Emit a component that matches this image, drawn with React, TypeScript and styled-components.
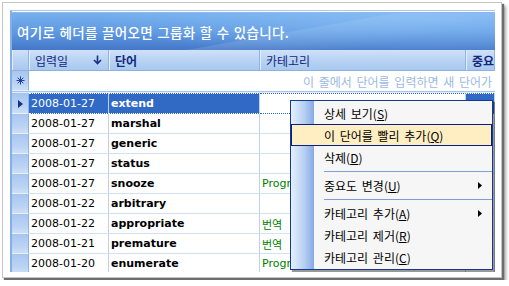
import React from 'react'
import styled, { createGlobalStyle } from 'styled-components'

const GlobalStyle = createGlobalStyle`
  html, body {
    margin: 0;
    padding: 0;
    background: #fff;
  }
  body {
    padding: 2px;
    font-family: "DejaVu Sans", "Noto Sans CJK KR", sans-serif;
  }
`

const COLS = '17px 80px 151px 206px 1fr'

type Row = { date: string; word: string; cat: string }

const rows: Row[] = [
  { date: '2008-01-27', word: 'extend', cat: '' },
  { date: '2008-01-27', word: 'marshal', cat: '' },
  { date: '2008-01-27', word: 'generic', cat: '' },
  { date: '2008-01-27', word: 'status', cat: '' },
  { date: '2008-01-27', word: 'snooze', cat: 'Programming' },
  { date: '2008-01-22', word: 'arbitrary', cat: '' },
  { date: '2008-01-22', word: 'appropriate', cat: '번역' },
  { date: '2008-01-21', word: 'premature', cat: '번역' },
  { date: '2008-01-20', word: 'enumerate', cat: 'Programming' },
]

type MenuEntry =
  | { sep: true }
  | { label: string; key: string; hot?: boolean; sub?: boolean }

const menu: MenuEntry[] = [
  { label: '상세 보기', key: 'S' },
  { label: '이 단어를 빨리 추가', key: 'Q', hot: true },
  { label: '삭제', key: 'D' },
  { sep: true },
  { label: '중요도 변경', key: 'U', sub: true },
  { sep: true },
  { label: '카테고리 추가', key: 'A', sub: true },
  { label: '카테고리 제거', key: 'R' },
  { label: '카테고리 관리', key: 'C' },
]

const App: React.FC = () => {
  return (
    <>
      <GlobalStyle />
      <Frame>
        <Grid>
          <GroupPanel>
            <GroupText>여기로 헤더를 끌어오면 그룹화 할 수 있습니다.</GroupText>
          </GroupPanel>
          <HeaderRow>
            <HeadCell />
            <HeadCell>
              <span>입력일</span>
              <svg width="9" height="10" viewBox="0 0 9 10">
                <path d="M4.5 0.5v8M1 5l3.5 3.5L8 5" fill="none" stroke="#1b2f84" strokeWidth="1.6" />
              </svg>
            </HeadCell>
            <HeadCell $bold>단어</HeadCell>
            <HeadCell>카테고리</HeadCell>
            <HeadCell $bold>중요도</HeadCell>
          </HeaderRow>
          <NewRow>
            <Selector>
              <svg width="9" height="9" viewBox="0 0 9 9">
                <path d="M4.5 0.5v8M0.5 4.5h8M1.7 1.7l5.6 5.6M7.3 1.7l-5.6 5.6" stroke="#23409a" strokeWidth="1" />
              </svg>
            </Selector>
            <NewRowHint>이 줄에서 단어를 입력하면 새 단어가 추가됩니다.</NewRowHint>
          </NewRow>
          <NewRowSeparator />
          {rows.map((r, i) => {
            const sel = i === 0
            return (
              <DataRow key={r.word}>
                <Selector>
                  {sel && (
                    <svg width="5" height="8" viewBox="0 0 5 8">
                      <path d="M0 0l5 4-5 4z" fill="#1b2f84" />
                    </svg>
                  )}
                </Selector>
                <Cell $selected={sel}>{r.date}</Cell>
                <Cell $selected={sel} $bold>{r.word}</Cell>
                <Cell $focusWhite={sel} $green>{r.cat}</Cell>
                <Cell $selected={sel} />
              </DataRow>
            )
          })}
          <Menu>
            {menu.map((m, i) =>
              'sep' in m ? (
                <MenuSep key={i} />
              ) : (
                <MenuItem key={i} $hot={m.hot}>
                  <span>
                    {m.label}(<u>{m.key}</u>)
                  </span>
                  {m.sub && (
                    <svg width="4" height="7" viewBox="0 0 4 7">
                      <path d="M0 0l4 3.5L0 7z" fill="#000" />
                    </svg>
                  )}
                </MenuItem>
              )
            )}
          </Menu>
        </Grid>
      </Frame>
    </>
  )
}

const Frame = styled.div`
  width: 488px;
  height: 265px;
  padding: 7px 3px 2px 7px;
  background: #fff;
  border: 1px solid #c4c4c4;
  box-shadow: 2px 2px 1px #6d6d6d, 4px 4px 3px rgba(0, 0, 0, 0.35);
`

const Grid = styled.div`
  position: relative;
  width: 485px;
  height: 262px;
  overflow: hidden;
  background: #fff;
  border-top: 1px solid #a9c8ef;
  border-left: 2px solid #86ade6;
  box-sizing: border-box;
  padding-top: 1px;
`

const GroupPanel = styled.div`
  height: 37px;
  border-top: 1px solid #8fb5ea;
  display: flex;
  align-items: center;
  padding-left: 5px;
  background:
    radial-gradient(ellipse 330px 40px at 420px 6px, rgba(150, 200, 250, 0.55), rgba(150, 200, 250, 0) 100%),
    linear-gradient(170deg, rgba(255, 255, 255, 0) 55%, rgba(255, 255, 255, 0.12) 56%, rgba(255, 255, 255, 0) 80%),
    linear-gradient(to bottom, #76b0ee 0%, #5f9ae2 50%, #4478c8 100%);
`

const GroupText = styled.span`
  color: #fff;
  font-family: "Noto Sans CJK KR", sans-serif;
  font-size: 13.5px;
  font-weight: 500;
  word-spacing: 1px;
  letter-spacing: 0.3px;
`

const HeaderRow = styled.div`
  display: grid;
  grid-template-columns: ${COLS};
  height: 20px;
  border-bottom: 1px solid #8eb1e4;
`

const HeadCell = styled.div<{ $bold?: boolean }>`
  display: flex;
  align-items: center;
  justify-content: space-between;
  padding: 0 6px;
  overflow: hidden;
  white-space: nowrap;
  background: linear-gradient(to bottom, #cfe1f8 0%, #b9d3f4 50%, #a9c8ef 100%);
  border-right: 1px solid #8fb3e6;
  box-shadow: inset 1px 0 0 #e4eefb;
  color: #13287d;
  font-family: "Noto Sans CJK KR", sans-serif;
  font-size: 12px;
  font-weight: ${(p) => (p.$bold ? 700 : 400)};
`

const NewRow = styled.div`
  display: grid;
  grid-template-columns: 17px 1fr;
  height: 20px;
`

const NewRowHint = styled.div`
  padding-left: 274px;
  display: flex;
  align-items: center;
  white-space: nowrap;
  overflow: hidden;
  color: #9bb9e4;
  font-family: "Noto Sans CJK KR", sans-serif;
  font-size: 12px;
  word-spacing: 2px;
`

const NewRowSeparator = styled.div`
  height: 1px;
  background: #e1ecfa;
  border-top: 1px solid #a6c5ee;
  border-bottom: 1px solid #a6c5ee;
`

const DataRow = styled.div`
  display: grid;
  grid-template-columns: ${COLS};
  height: 20px;
`

const Selector = styled.div`
  display: flex;
  align-items: center;
  justify-content: center;
  background: linear-gradient(to bottom, #a7c6ef 0%, #bcd4f4 70%, #cddff7 100%);
  border-right: 1px solid #8cb1e6;
  border-bottom: 1px solid #e6effb;
`

const Cell = styled.div<{ $selected?: boolean; $bold?: boolean; $green?: boolean; $focusWhite?: boolean }>`
  display: flex;
  align-items: center;
  padding-left: 2px;
  overflow: hidden;
  white-space: nowrap;
  font-size: 11px;
  font-weight: ${(p) => (p.$bold ? 700 : 400)};
  color: ${(p) => (p.$selected ? '#fff' : p.$green ? '#008000' : '#000')};
  font-family: ${(p) => (p.$green ? '"DejaVu Sans", "Noto Sans CJK KR", sans-serif' : '"DejaVu Sans", sans-serif')};
  background: ${(p) => (p.$selected ? '#316ac5' : '#fff')};
  border-right: 1px solid #bcd1ee;
  border-bottom: 1px ${(p) => (p.$selected ? 'dotted #fff' : p.$focusWhite ? 'dotted #316ac5' : 'solid #d3e1f4')};
  border-top: ${(p) => (p.$selected ? '1px dotted #fff' : p.$focusWhite ? '1px dotted #316ac5' : '0')};
  margin-top: ${(p) => (p.$selected || p.$focusWhite ? '-1px' : '0')};
`

const Menu = styled.div`
  position: absolute;
  left: 278px;
  top: 89px;
  width: 201px;
  padding: 1px 0;
  border: 1px solid #143a94;
  background: linear-gradient(to right, #e6f0fd 0px, #b4cdf1 14px, #85a9e4 23px, #f6f6f6 23px);
  box-shadow: 2px 2px 1px rgba(0, 0, 0, 0.4);
  font-family: "Noto Sans CJK KR", sans-serif;
  font-size: 12px;
  color: #000;
`

const MenuItem = styled.div<{ $hot?: boolean }>`
  display: flex;
  align-items: center;
  justify-content: space-between;
  height: ${(p) => (p.$hot ? '20px' : '22px')};
  padding: 0 10px 0 ${(p) => (p.$hot ? '32px' : '33px')};
  word-spacing: 2px;
  background: ${(p) => (p.$hot ? '#ffeec2' : 'transparent')};
  border: ${(p) => (p.$hot ? '1px solid #0a1f80' : '0')};

  u {
    text-decoration: underline;
    text-underline-offset: 1px;
  }
`

const MenuSep = styled.div`
  height: 1px;
  margin: 3px 0 2px 33px;
  background: #7d9fd9;
`

export default App
